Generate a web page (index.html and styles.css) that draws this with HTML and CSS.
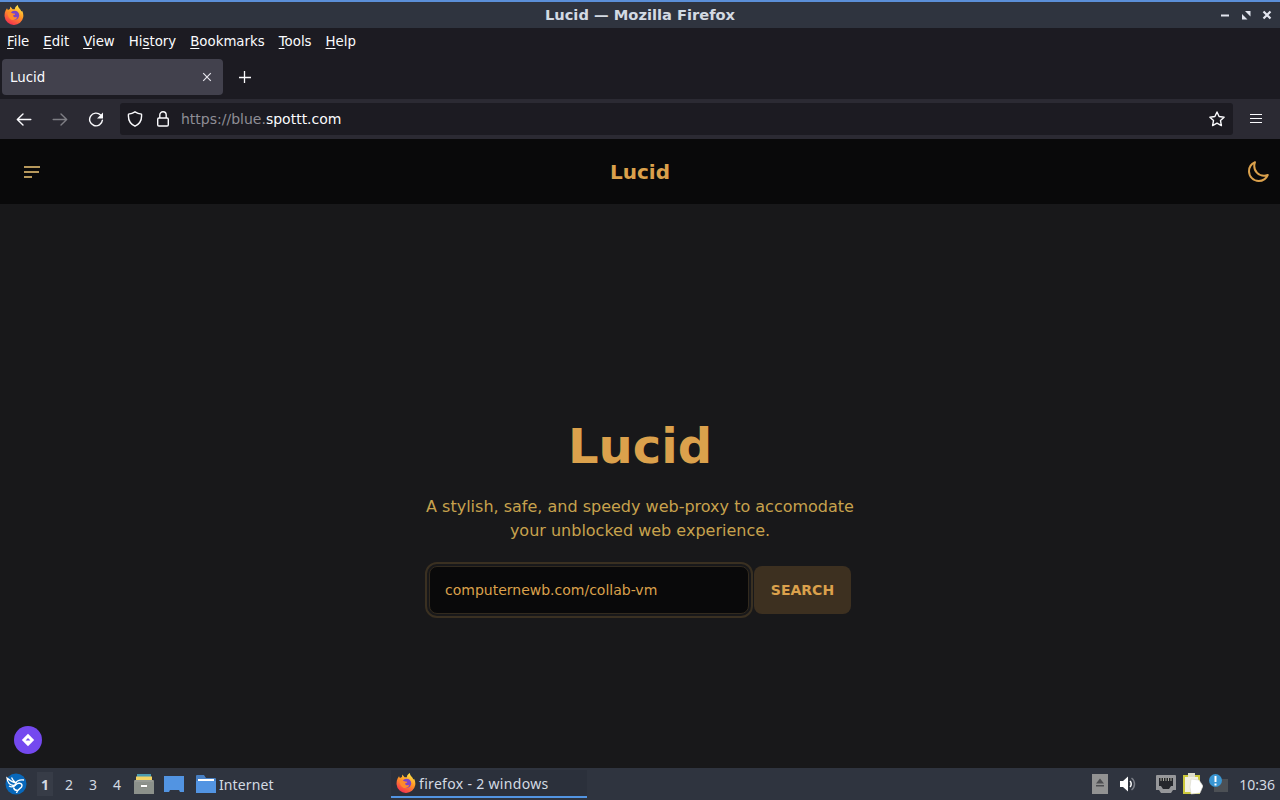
FILE: index.html
```html
<!DOCTYPE html>
<html lang="en">
<head>
    <meta charset="UTF-8">
    <meta name="viewport" content="width=device-width, initial-scale=1.0">
    <title>Lucid</title>
    <link rel="stylesheet" href="styles.css">
</head>
<body>
    <svg width="0" height="0" class="defs">
        <defs>
            <linearGradient id="flame" x1="0.8" y1="0" x2="0.3" y2="1">
                <stop offset="0" stop-color="#fff04a"/>
                <stop offset="0.45" stop-color="#ff9825"/>
                <stop offset="1" stop-color="#f52c51"/>
            </linearGradient>
            <symbol id="firefox" viewBox="0 0 20 20">
                <path d="M1.6 5.6 3 3.2l.9 1.7 2-1 .4-2.5 2.3 2.8 2.2.1C10.900 2.200 12.300.8 14 0c-.2 1.700.7 2.600 2 4.100.6.7 1.100 1.500 1.300 2.400l.8-.8c1.100 2 1.500 4.200 1.100 6.600A9.300 9.300 0 0 1 10 20 9.300 9.300 0 0 1 .6 11.500c-.2-2.200.1-4.200 1-5.900z" fill="url(#flame)"/>
                <circle cx="10.600" cy="10.300" r="4.600" fill="#7a45c8"/>
                <path d="M3.500 8c2-.9 4-.4 5.500.6l2.300.1c-.2 1-1.200 1.500-2.300 1.800.1 1.700 2.400 2.500 4.300 1.300-.8 2.700-3.500 3.900-6 2.900C4.900 13.600 3.500 11 3.500 8z" fill="#ff8a2b"/>
            </symbol>
        </defs>
    </svg>

    <header class="titlebar">
        <svg class="app-icon" width="20" height="20"><use href="#firefox"/></svg>
        <span class="window-title">Lucid — Mozilla Firefox</span>
        <svg class="window-buttons" width="56" height="14" viewBox="0 0 56 14">
            <path d="M3 7.500h8" stroke="#e2e5ef" stroke-width="2"/>
            <path d="M27 3h5.500v5.500zM24 6v5.500h5.500z" fill="#e2e5ef"/>
            <path d="m45.500 3.500 7 7m0-7-7 7" stroke="#e2e5ef" stroke-width="2.200"/>
        </svg>
    </header>

    <nav class="menubar">
        <span><u>F</u>ile</span>
        <span><u>E</u>dit</span>
        <span><u>V</u>iew</span>
        <span>Hi<u>s</u>tory</span>
        <span><u>B</u>ookmarks</span>
        <span><u>T</u>ools</span>
        <span><u>H</u>elp</span>
    </nav>

    <div class="tabbar">
        <div class="tab">
            <span>Lucid</span>
            <svg width="10" height="10" viewBox="0 0 10 10"><path d="m1.200 1.200 7.600 7.600m0-7.600L1.200 8.800" stroke="#e6e5ec" stroke-width="1.200"/></svg>
        </div>
        <svg class="new-tab" width="12" height="12" viewBox="0 0 12 12"><path d="M5.500 0v12M0 6.500h12" stroke="#fbfbfe" stroke-width="1.300"/></svg>
    </div>

    <div class="toolbar">
        <svg class="tool" width="16" height="16" viewBox="0 0 16 16"><path d="M14.800 8.500H1.500M7 3 1.300 8.500l5.700 5.500" class="stroke"/></svg>
        <svg class="tool faded" width="16" height="16" viewBox="0 0 16 16"><path d="M1.200 8.500h13.300M9 3l5.700 5.500L9 14" class="stroke"/></svg>
        <svg class="tool" width="16" height="16" viewBox="0 0 16 16">
            <path d="M12.600 4A6.400 6.400 0 1 0 14.400 9.200" class="stroke"/>
            <path d="M15 1.500v6H9z" fill="#fbfbfe"/>
        </svg>
        <div class="urlbar">
            <svg class="shield" width="16" height="16" viewBox="0 0 16 16"><path d="M8 .8c2 1.300 4 2 6.500 2.300.5 4.900-1.500 9.700-6.500 12.100C3 12.800 1 8 1.500 3.100 4 2.800 6 2.100 8 .8z" class="stroke"/></svg>
            <svg class="lock" width="14" height="16" viewBox="0 0 14 16"><path d="M3.800 7V4a3.200 3.200 0 0 1 6.400 0v3M2.900 7h8.200a1.200 1.200 0 0 1 1.200 1.200v5.600a1.200 1.200 0 0 1-1.200 1.200H2.900a1.200 1.200 0 0 1-1.200-1.200V8.200A1.200 1.200 0 0 1 2.900 7z" class="stroke"/></svg>
            <span class="url">https://blue.<b>spottt.com</b></span>
            <svg class="star" width="16" height="16" viewBox="0 0 16 16"><path d="m8 1 2.100 4.500 5 .7-3.600 3.400.9 5L8 12.200l-4.400 2.400.9-5L.9 6.200l5-.7z" class="stroke"/></svg>
        </div>
        <svg class="app-menu" width="12" height="10" viewBox="0 0 12 10"><path d="M0 .5h12M0 4.500h12M0 8.500h12" stroke="#fbfbfe" stroke-width="1.200"/></svg>
    </div>

    <div class="site-header">
        <svg width="16" height="14" viewBox="0 0 16 14"><path d="M0 2h16M0 7h15M0 12h8" stroke="#b6985c" stroke-width="1.800"/></svg>
        <span class="brand">Lucid</span>
        <svg class="moon" width="24" height="24" viewBox="0 0 24 24"><path d="M21.750 15A9.700 9.700 0 0 1 18 15.750C12.600 15.750 8.250 11.400 8.250 6c0-1.300.3-2.600.75-3.750A9.750 9.750 0 0 0 3 11.250C3 16.600 7.400 21 12.750 21c4 0 7.500-2.500 9-6z"/></svg>
    </div>

    <main class="page">
        <h1>Lucid</h1>
        <p>A stylish, safe, and speedy web-proxy to accomodate your unblocked web experience.</p>
        <div class="search">
            <div class="search-field">computernewb.com/collab-vm</div>
            <div class="search-btn">SEARCH</div>
        </div>
        <div class="badge">
            <svg width="14" height="14" viewBox="0 0 14 14"><path d="m7 .8 6.200 6.200L7 13.200.8 7z" fill="#fff"/><path d="M4.600 7.400 7 5l2.400 2.400z" fill="#7449ef"/></svg>
        </div>
    </main>

    <footer class="taskbar">
        <svg class="start" width="22" height="22" viewBox="0 0 22 22">
            <circle cx="11" cy="11" r="10.500" fill="#0868bb"/>
            <path d="M2 5c.5 4.500 2.500 7 6.500 7.500 1.500-.2 2.500-1 2.500-2.500C8.500 9.500 5.500 8 2 5zM6.500 4.500c1 2.500 2.500 4 4.500 5.500.8-2.500 3-3.500 8-3" fill="none" stroke="#fff" stroke-width="1.300"/>
            <path d="M4 13c2.500 1.500 5 1 7-1.500 2-2.200 6-1.500 6 1.200 0 3-5 2.800-5.500 7.300M8.500 14.500c.5 2 2 3 4 3" fill="none" stroke="#fff" stroke-width="1.400"/>
        </svg>
        <div class="desktops">
            <span><b>1</b></span>
            <span>2</span>
            <span>3</span>
            <span>4</span>
        </div>
        <svg class="cabinet" width="20" height="20" viewBox="0 0 20 20">
            <path d="M3 0h14v3H3z" fill="#4b9bb0"/>
            <path d="M2 2.500h16V6H2z" fill="#f3d364"/>
            <path d="M1 6h18l1 2v12H0V8z" fill="#8c918b"/>
            <path d="M0 7h20" stroke="#a1a49e"/>
            <rect x="6.500" y="10.500" width="7" height="3" rx="1" fill="#fff" stroke="#73766f" stroke-width=".8"/>
        </svg>
        <svg class="desktop-icon" width="20" height="16" viewBox="0 0 20 16"><path d="M0 0h20v16h-4l-1-2H6l-1 2H0z" fill="#5294e2"/></svg>
        <div class="task folder">
            <svg width="20" height="18" viewBox="0 0 20 18">
                <path d="M0 1q0-1 1-1h7l2 3h9q1 0 1 1v14H0z" fill="#477fc3"/>
                <path d="M2 4h16v4H2z" fill="#fff"/>
                <path d="M0 6h20v12H0z" fill="#5294e2"/>
            </svg>
            <span>Internet</span>
        </div>
        <div class="task current">
            <svg width="20" height="20"><use href="#firefox"/></svg>
            <span>firefox - 2 windows</span>
        </div>
        <div class="tray">
            <svg class="eject" width="16" height="20" viewBox="0 0 16 20"><path d="M0 0h16v20H0z" fill="#929292"/><path d="m4 9.500 4-5 4 5zM4 11h8v1.500H4z" fill="#4c4d50"/></svg>
            <svg class="volume" width="16" height="16" viewBox="0 0 16 16">
                <path d="M0 5h3l5-4.500v15L3 11H0z" fill="#fff"/>
                <path d="M10 5c1.600 1.500 1.600 4.500 0 6" fill="none" stroke="#fff" stroke-width="1.500"/>
                <path d="M11.500 2c4 3 4 9 0 12" fill="none" stroke="#7b7e87" stroke-width="1.500"/>
            </svg>
            <svg class="network" width="20" height="18" viewBox="0 0 20 18">
                <path d="M1 0h18q1 0 1 1v14h-3l-2 3H5l-2-3H0V1q0-1 1-1z" fill="#96979a"/>
                <path d="M3 3h14v8h-2l-2 3H7l-2-3H3z" fill="#25272c"/>
                <path d="M5 3v3m2.500-3v3M10 3v3m2.500-3v3M15 3v3" stroke="#a9a99e"/>
            </svg>
            <svg class="clipboard" width="20" height="22" viewBox="0 0 20 22">
                <path d="M0 2h17v19H0z" fill="#ccc93c"/>
                <path d="M2 4h13v15H2z" fill="#f1f0df"/>
                <path d="M5 0h7v4H5z" fill="#ddddca"/>
                <path d="m8 6 8 1 4 6-3 7-9 1-1-7z" fill="#fff" stroke="#d6d5ca" stroke-width=".6"/>
            </svg>
            <svg class="notice" width="20" height="20" viewBox="0 0 20 20">
                <path d="M8 5h11v13H5v-5z" fill="#4c5055"/>
                <circle cx="6.500" cy="6.500" r="6.500" fill="#3995d2"/>
                <path d="M6.500 2v6m0 1.500v2" stroke="#fff" stroke-width="2"/>
            </svg>
            <span class="clock">10:36</span>
        </div>
    </footer>
</body>
</html>
```

FILE: styles.css
```css
:root {
    --gold: #dba14c;
    --light: #fbfbfe;
    --panel: #2f343f;
    --chrome: #1c1b22;
}

* {
    margin: 0;
    padding: 0;
    box-sizing: border-box;
}

body {
    width: 1280px;
    height: 800px;
    overflow: hidden;
    display: flex;
    flex-direction: column;
    background: #18181a;
    font-family: 'DejaVu Sans', sans-serif;
}

svg {
    display: block;
    flex: none;
}

.defs {
    position: absolute;
}

.stroke {
    fill: none;
    stroke: var(--light);
    stroke-width: 1.4;
    stroke-linejoin: round;
    stroke-linecap: round;
}

.titlebar {
    height: 28px;
    flex: none;
    display: flex;
    align-items: center;
    border-top: 2px solid #5b8fd8;
    background: var(--panel);
    padding: 0 6px 0 4px;
}

.window-title {
    flex: 1;
    text-align: center;
    padding: 0 0 2px 38px;
    color: #d3dae3;
    font-size: 14.67px;
    font-weight: bold;
}

.menubar {
    height: 27px;
    flex: none;
    display: flex;
    align-items: center;
    gap: 14px;
    padding-left: 7px;
    background: var(--chrome);
    color: var(--light);
    font-size: 13.33px;
    white-space: nowrap;
}

.menubar u {
    text-underline-offset: 2px;
}

.tabbar {
    height: 44px;
    flex: none;
    display: flex;
    align-items: center;
    padding: 0 2px;
    background: var(--chrome);
}

.tab {
    width: 221px;
    height: 36px;
    display: flex;
    align-items: center;
    justify-content: space-between;
    padding: 0 11px 0 8px;
    border-radius: 4px;
    background: #42414d;
    color: var(--light);
    font-size: 13.33px;
}

.new-tab {
    margin-left: 16px;
}

.toolbar {
    height: 40px;
    flex: none;
    display: flex;
    align-items: center;
    background: #2b2a33;
}

.tool {
    margin-left: 16px;
    margin-right: 4px;
}

.faded {
    opacity: 0.4;
}

.urlbar {
    width: 1113px;
    height: 32px;
    display: flex;
    align-items: center;
    margin-left: 12px;
    padding: 0 8px 0 7px;
    border-radius: 3px;
    background: var(--chrome);
}

.lock {
    margin-left: 13px;
}

.url {
    flex: 1;
    margin-left: 11px;
    color: #8f8e96;
    font-size: 14px;
}

.url b {
    color: var(--light);
    font-weight: normal;
}

.app-menu {
    margin-left: 17px;
}

.site-header {
    height: 65px;
    flex: none;
    display: flex;
    align-items: center;
    padding: 0 10px 0 24px;
    background: #09090a;
}

.brand {
    flex: 1;
    text-align: center;
    padding-right: 6px;
    color: var(--gold);
    font-size: 20px;
    font-weight: bold;
}

.moon {
    fill: none;
    stroke: var(--gold);
    stroke-width: 2;
    stroke-linejoin: round;
}

.page {
    position: relative;
    height: 564px;
    flex: none;
    display: flex;
    flex-direction: column;
    align-items: center;
    padding-top: 218px;
}

.page h1 {
    color: var(--gold);
    font-size: 48px;
    line-height: 48px;
}

.page p {
    width: 448px;
    margin-top: 25px;
    color: #c7a24d;
    font-size: 16px;
    line-height: 24px;
    text-align: center;
}

.search {
    display: flex;
    gap: 5px;
    margin-top: 23px;
    font-size: 14px;
}

.search-field {
    width: 320px;
    height: 48px;
    display: flex;
    align-items: center;
    padding-left: 15px;
    border: 1px solid #322a1e;
    border-radius: 8px;
    outline: 2px solid #3a3021;
    outline-offset: 2px;
    background: #09090a;
    color: var(--gold);
}

.search-btn {
    width: 97px;
    height: 48px;
    line-height: 48px;
    border-radius: 8px;
    background: #3d3020;
    color: var(--gold);
    font-weight: bold;
    text-align: center;
}

.badge {
    position: absolute;
    left: 14px;
    bottom: 14px;
    width: 28px;
    height: 28px;
    display: flex;
    align-items: center;
    justify-content: center;
    border-radius: 50%;
    background: #7449ef;
}

.taskbar {
    height: 32px;
    flex: none;
    display: flex;
    align-items: center;
    padding-left: 5px;
    background: var(--panel);
    color: #d3dae3;
    font-family: 'Noto Sans', sans-serif;
    font-size: 14px;
}

.desktops {
    display: flex;
    margin-left: 6px;
}

.desktops span {
    width: 24px;
    height: 24px;
    line-height: 26px;
    text-align: center;
}

.desktops b {
    display: block;
    margin: 0 4px;
    background: #373c47;
    height: 24px;
}

.cabinet {
    margin-left: 5px;
}

.desktop-icon {
    margin-left: 10px;
}

.task {
    height: 32px;
    display: flex;
    align-items: center;
    gap: 3px;
    white-space: nowrap;
}

.folder {
    width: 195px;
    margin-left: 12px;
    letter-spacing: 0.1px;
}

.current {
    width: 196px;
    height: 28px;
    padding-left: 5px;
    border-bottom: 2px solid #5294e2;
    background: #2b303b;
    letter-spacing: 0.32px;
}

.tray {
    flex: 1;
    display: flex;
    align-items: center;
    justify-content: flex-end;
    padding-right: 5px;
}

.volume {
    margin-left: 12px;
}

.network {
    margin-left: 20px;
}

.clipboard {
    margin-left: 7px;
}

.notice {
    margin-left: 6px;
}

.clock {
    margin-left: 10px;
}
```
